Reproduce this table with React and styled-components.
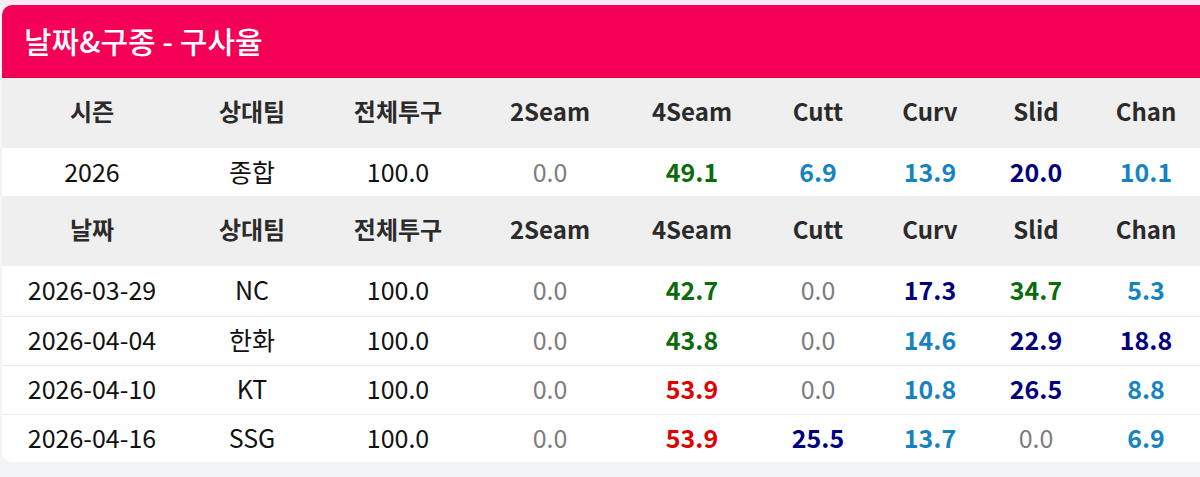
import styled, { createGlobalStyle } from 'styled-components'

const GlobalStyle = createGlobalStyle`
  html, body {
    margin: 0;
    padding: 0;
    background: #f3f4f6;
    overflow: hidden;
  }
  body {
    font-family: "Noto Sans CJK KR", "Noto Sans", sans-serif;
  }
`

const Page = styled.div`
  padding: 5px 0 0 2px;
  background: linear-gradient(#fbeaf4 0, #fbeaf4 5px, #f3f4f6 5px);
  height: 477px;
  box-sizing: border-box;
`

const Card = styled.div`
  background: #fff;
  border-radius: 10px;
  overflow: hidden;
  margin-right: -12px;
`

const Title = styled.div`
  height: 73px;
  box-sizing: border-box;
  background: #f50057;
  border-bottom: 1px solid #d6004c;
  color: #fff;
  font-size: 30px;
  font-weight: 500;
  display: flex;
  align-items: center;
  padding: 0 0 2px 22px;
  letter-spacing: 0;
`

const Table = styled.table`
  width: 1200px;
  table-layout: fixed;
  border-collapse: collapse;
`

const HeadRow = styled.tr`
  background: #efefef;
  height: 70px;
`

const Th = styled.th`
  font-size: 24px;
  font-weight: 700;
  color: #2b2b2b;
  text-align: center;
  padding: 0 0 5px;
`

const Row = styled.tr`
  height: ${p => (p.$tall ? '50px' : '49px')};
  border-bottom: ${p => (p.$tall ? 'none' : '1px solid #ebebeb')};
  &:first-child {
    height: 50px;
  }
  &:last-child {
    border-bottom: none;
    height: 48px;
  }
`

const Td = styled.td`
  font-size: 25px;
  text-align: center;
  padding: 0 0 3px;
  color: ${p => p.$color || '#111'};
  font-weight: ${p => (p.$bold ? 700 : 400)};
`

const colWidths = [180, 140, 152, 152, 132, 120, 104, 108, 112]

const pitches = ['2Seam', '4Seam', 'Cutt', 'Curv', 'Slid', 'Chan']

const GRAY = '#7d7d7d'
const GREEN = '#0b6b0b'
const BLUE = '#1683c1'
const NAVY = '#00007f'
const RED = '#e00000'

const colorOf = c => ({ g: GRAY, gr: GREEN, b: BLUE, n: NAVY, r: RED }[c])

const season = ['2026', '종합', '100.0', [
  ['0.0', 'g'], ['49.1', 'gr'], ['6.9', 'b'], ['13.9', 'b'], ['20.0', 'n'], ['10.1', 'b'],
]]

const games = [
  ['2026-03-29', 'NC', '100.0', [['0.0', 'g'], ['42.7', 'gr'], ['0.0', 'g'], ['17.3', 'n'], ['34.7', 'gr'], ['5.3', 'b']]],
  ['2026-04-04', '한화', '100.0', [['0.0', 'g'], ['43.8', 'gr'], ['0.0', 'g'], ['14.6', 'b'], ['22.9', 'n'], ['18.8', 'n']]],
  ['2026-04-10', 'KT', '100.0', [['0.0', 'g'], ['53.9', 'r'], ['0.0', 'g'], ['10.8', 'b'], ['26.5', 'n'], ['8.8', 'b']]],
  ['2026-04-16', 'SSG', '100.0', [['0.0', 'g'], ['53.9', 'r'], ['25.5', 'n'], ['13.7', 'b'], ['0.0', 'g'], ['6.9', 'b']]],
]

const Header = ({ first }) => (
  <HeadRow>
    <Th>{first}</Th>
    <Th>상대팀</Th>
    <Th>전체투구</Th>
    {pitches.map(p => <Th key={p}>{p}</Th>)}
  </HeadRow>
)

const DataRow = ({ data, tall }) => {
  const [a, b, c, vals] = data
  return (
    <Row $tall={tall}>
      <Td>{a}</Td>
      <Td>{b}</Td>
      <Td>{c}</Td>
      {vals.map(([v, k], i) => (
        <Td key={i} $color={colorOf(k)} $bold={k !== 'g'}>{v}</Td>
      ))}
    </Row>
  )
}

export default function App() {
  return (
    <Page>
      <GlobalStyle />
      <Card>
        <Title>날짜&amp;구종 - 구사율</Title>
        <Table>
          <colgroup>
            {colWidths.map((w, i) => <col key={i} style={{ width: w }} />)}
          </colgroup>
          <thead>
            <Header first="시즌" />
          </thead>
          <tbody>
            <DataRow data={season} tall />
          </tbody>
          <thead>
            <Header first="날짜" />
          </thead>
          <tbody>
            {games.map(g => <DataRow key={g[0]} data={g} />)}
          </tbody>
        </Table>
      </Card>
    </Page>
  )
}
